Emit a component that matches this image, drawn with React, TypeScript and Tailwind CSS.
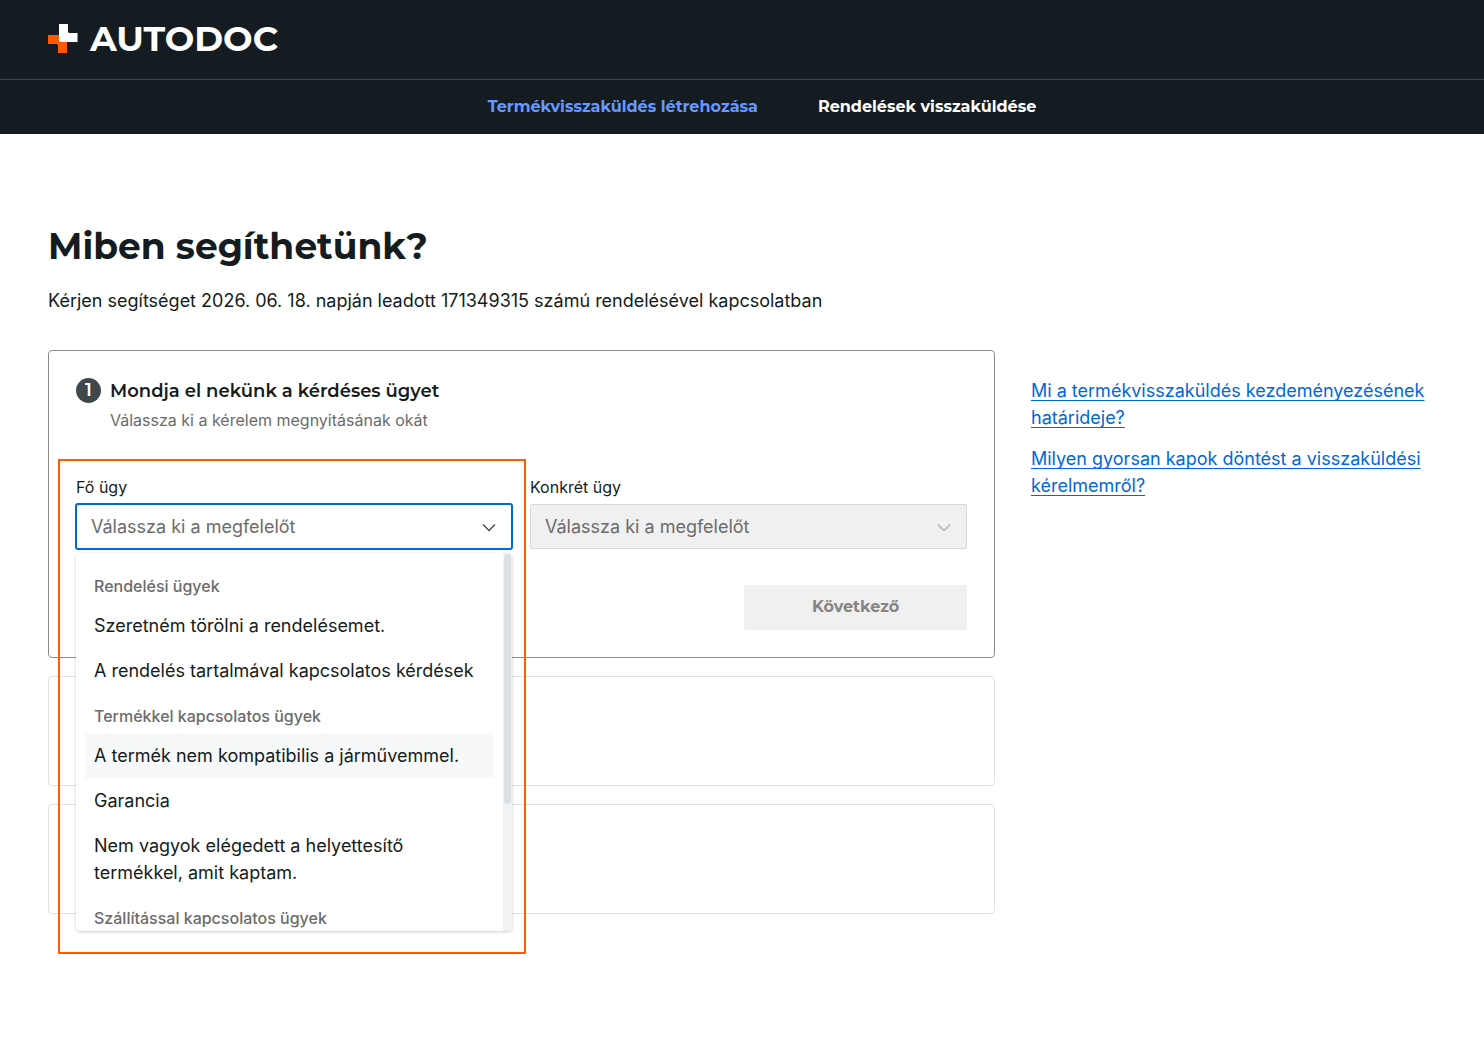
import React, { useState } from 'react';

const issueGroups = [
  {
    label: 'Rendelési ügyek',
    items: ['Szeretném törölni a rendelésemet.', 'A rendelés tartalmával kapcsolatos kérdések'],
  },
  {
    label: 'Termékkel kapcsolatos ügyek',
    items: [
      'A termék nem kompatibilis a járművemmel.',
      'Garancia',
      'Nem vagyok elégedett a helyettesítő termékkel, amit kaptam.',
    ],
  },
  { label: 'Szállítással kapcsolatos ügyek', items: [] },
];

const helpLinks = [
  'Mi a termékvisszaküldés kezdeményezésének határideje?',
  'Milyen gyorsan kapok döntést a visszaküldési kérelmemről?',
];

const Logo: React.FC = () => (
  <a href="#" className="flex items-center gap-3 text-white">
    <svg width="30" height="30" viewBox="0 0 30 30" aria-hidden="true">
      <path d="M0 11h19v18h-9v-8l-1-1H0z" fill="#ff5a00" />
      <path d="M11 0h9v8l1 1h8.500v9H12l-1-1z" fill="#fff" />
    </svg>
    <span className="text-[35px] leading-[45px] font-bold">AUTODOC</span>
  </a>
);

const Chevron: React.FC<{ className: string }> = ({ className }) => (
  <svg
    className={`pointer-events-none absolute right-4 top-4 ${className}`}
    width="14"
    height="14"
    viewBox="0 0 14 14"
    fill="none"
    stroke="currentColor"
    aria-hidden="true"
  >
    <path d="M1 4.500l6 6 6-6" strokeWidth="1.3" />
  </svg>
);

const IssueMenu: React.FC<{ onSelect: (item: string) => void }> = ({ onSelect }) => {
  const [active, setActive] = useState('A termék nem kompatibilis a járművemmel.');

  return (
    <div className="absolute inset-x-0 top-full z-10 mt-1 flex h-[378px] overflow-hidden rounded bg-white shadow-[0_1px_3px_rgba(0,0,0,0.2)]">
      <div className="flex-1 overflow-hidden px-[9px] pt-[10px]">
        {issueGroups.map((group) => (
          <div key={group.label}>
            <p className="px-[9px] pt-[11px] pb-[5px] text-base font-medium text-[#6b6b6b]">{group.label}</p>
            {group.items.map((item) => (
              <button
                key={item}
                type="button"
                onMouseEnter={() => setActive(item)}
                onClick={() => onSelect(item)}
                className={`block w-full p-[9px] text-left ${item === active ? 'bg-[#f7f8fa]' : ''}`}
              >
                {item}
              </button>
            ))}
          </div>
        ))}
      </div>
      {/* Scrollbar */}
      <div className="w-[9px] bg-[#f0f2f4] p-px">
        <div className="h-[250px] rounded-full bg-[#dce0e4]" />
      </div>
    </div>
  );
};

const App: React.FC = () => {
  const [mainIssue, setMainIssue] = useState('');
  const [open, setOpen] = useState(true);

  const handleSelect = (item: string) => {
    setMainIssue(item);
    setOpen(false);
  };

  return (
    <div className="bg-white font-['Inter',sans-serif] text-[18px] leading-[27px] text-[#141c20]">
      <header className="bg-[#141c21] font-['Montserrat','Inter',sans-serif]">
        <div className="flex h-20 items-center border-b border-[#40484c] px-12 pb-0.5">
          <Logo />
        </div>
        <nav className="flex h-[54px] items-center justify-center gap-[60px] pl-10 text-base font-bold text-white">
          <a href="#" className="text-[#6699ff]">Termékvisszaküldés létrehozása</a>
          <a href="#">Rendelések visszaküldése</a>
        </nav>
      </header>

      <main className="px-12 pt-[90px] pb-16">
        <h1 className="font-['Montserrat','Inter',sans-serif] text-[36px] leading-[45px] font-bold">Miben segíthetünk?</h1>
        <p className="mt-[18px]">Kérjen segítséget 2026. 06. 18. napján leadott 171349315 számú rendelésével kapcsolatban</p>

        <div className="mt-9 grid grid-cols-[947fr_405fr] gap-9">
          <div className="space-y-[18px]">
            {/* Step 1 */}
            <section className="rounded border border-[#8a8a8a] p-[27px]">
              <div className="flex gap-[9px]">
                <span className="flex size-[25px] items-center justify-center rounded-full bg-[#40484c] font-['Montserrat','Inter',sans-serif] font-semibold text-white">
                  1
                </span>
                <div>
                  <h2 className="font-['Montserrat','Inter',sans-serif] font-semibold">Mondja el nekünk a kérdéses ügyet</h2>
                  <p className="mt-[3px] text-base text-[#6b6b6b]">Válassza ki a kérelem megnyitásának okát</p>
                </div>
              </div>

              <div className="mt-[43px] grid grid-cols-[436fr_437fr] gap-[18px]">
                <div className="relative">
                  <label htmlFor="main-issue" className="block text-base">Fő ügy</label>
                  <div className="relative mt-[5px]">
                    <select
                      id="main-issue"
                      value={mainIssue}
                      onChange={(e) => setMainIssue(e.target.value)}
                      className="block h-[45px] w-full appearance-none rounded-[2px] border border-[#0068d7] bg-white px-[14px] text-[#6b6b6b] ring-1 ring-[#0068d7] outline-none"
                    >
                      <option value="">Válassza ki a megfelelőt</option>
                      {issueGroups.map((group) => (
                        <optgroup key={group.label} label={group.label}>
                          {group.items.map((item) => (
                            <option key={item}>{item}</option>
                          ))}
                        </optgroup>
                      ))}
                    </select>
                    <Chevron className="text-[#40484c]" />
                    {open && <IssueMenu onSelect={handleSelect} />}
                  </div>
                  {/* Highlight frame */}
                  <div className="pointer-events-none absolute -left-[18px] -top-4 z-20 h-[495px] w-[calc(100%+32px)] border-2 border-[#ff5a00]" />
                </div>

                <div>
                  <label htmlFor="exact-issue" className="block text-base">Konkrét ügy</label>
                  <div className="relative mt-[5px]">
                    <select
                      id="exact-issue"
                      disabled
                      className="block h-[45px] w-full appearance-none rounded-[2px] border border-[#d9d9d9] bg-[#f0f0f0] px-[14px] text-[#6b6b6b] opacity-100"
                    >
                      <option>Válassza ki a megfelelőt</option>
                    </select>
                    <Chevron className="text-[#b0b0b0]" />
                  </div>
                </div>
              </div>

              <button
                type="button"
                disabled={!mainIssue}
                className="mt-9 ml-auto block h-[45px] w-1/4 rounded-[2px] bg-[#f0f0f0] pb-0.5 font-['Montserrat','Inter',sans-serif] text-base font-bold text-[#858585]"
              >
                Következő
              </button>
            </section>

            {/* Next steps */}
            <section className="h-[110px] rounded border border-[#e0e0e0]" />
            <section className="h-[110px] rounded border border-[#e0e0e0]" />
          </div>

          <aside className="space-y-[14px] pt-[27px]">
            {helpLinks.map((link) => (
              <p key={link}>
                <a href="#" className="text-[#0068d7] underline decoration-1 underline-offset-3 [text-decoration-skip-ink:none]">
                  {link}
                </a>
              </p>
            ))}
          </aside>
        </div>
      </main>
    </div>
  );
};

export default App;
